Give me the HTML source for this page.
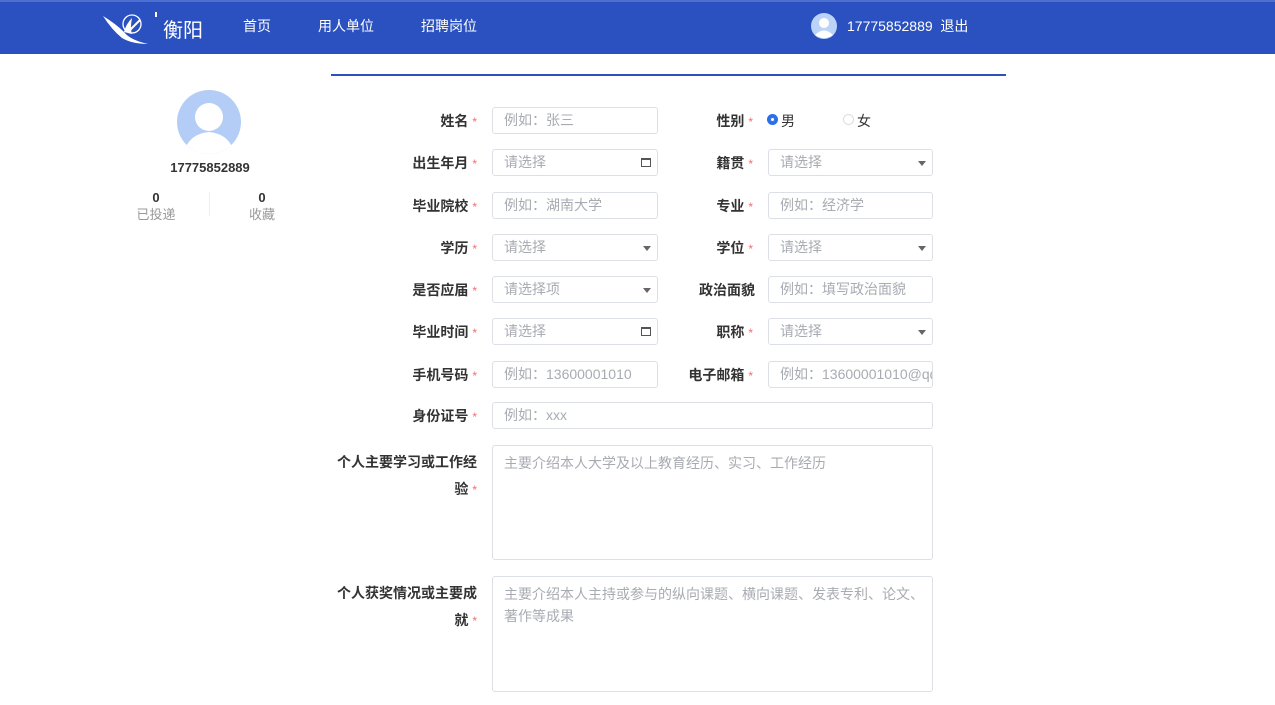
<!DOCTYPE html>
<html><head><meta charset="utf-8"><style>
*{box-sizing:border-box;margin:0;padding:0}
body{width:1275px;height:705px;background:#fff;font-family:"Liberation Sans","Noto Sans CJK SC",sans-serif;position:relative;overflow:hidden;color:#333}
.hd{position:absolute;left:0;top:0;width:1275px;height:54px;background:#2a51bf;border-top:2px solid #4c6fd0}
.hd span{position:absolute;color:#fff;font-size:14px;top:14px}
.a{position:absolute}
.lbl{position:absolute;font-size:14px;font-weight:bold;color:#333;text-align:right;width:160px}
.lbl i{color:#f56c6c;font-style:normal;font-weight:normal;margin-left:4px;font-size:12px}
.in{position:absolute;height:27px;border:1px solid #dcdfe6;border-radius:3px;font-size:14px;color:#a8abb2;padding:0 11px;line-height:25px;white-space:nowrap;overflow:hidden}
.ta{position:absolute;border:1px solid #dcdfe6;border-radius:3px;font-size:14px;color:#a8abb2;padding:6px 4px 6px 11px;line-height:22px}
.arr{position:absolute;right:6px;top:11px;width:0;height:0;border-left:4px solid transparent;border-right:4px solid transparent;border-top:5px solid #666}
.cal{position:absolute;right:6px;top:8px;width:10px;height:9px;border:1px solid #555;border-top-width:2px}
</style></head><body>
<div class="hd">
<svg class="a" style="left:102px;top:8px" width="56" height="36" viewBox="0 0 56 36"><path d="M1 6 Q14 14 22 22 Q28 30 46 34 Q30 34 20 28 Q10 20 1 6Z" fill="#fff"/><path d="M22 22 Q24 14 30 8 Q28 18 30 24Z" fill="#fff"/><circle cx="30" cy="14" r="9" fill="none" stroke="#fff" stroke-width="1.3"/><path d="M28 20 L38 10" stroke="#fff" stroke-width="2"/><rect x="53" y="2" width="2" height="5" fill="#fff"/></svg>
<span style="left:163px;top:12px;font-size:20px">衡阳</span>
<span style="left:243px">首页</span>
<span style="left:318px">用人单位</span>
<span style="left:421px">招聘岗位</span>
<svg class="a" style="left:811px;top:11px" width="26" height="26" viewBox="0 0 26 26"><circle cx="13" cy="13" r="13" fill="#bcd3f8"/><circle cx="13" cy="10" r="5" fill="#fff"/><path d="M4 22 Q13 13 22 22 Q13 28 4 22Z" fill="#fff"/></svg>
<span style="left:847px">17775852889&nbsp;&nbsp;退出</span>
</div>
<div class="a" style="left:331px;top:74px;width:675px;height:2px;background:#2a51bf"></div>
<svg class="a" style="left:177px;top:90px" width="64" height="64" viewBox="0 0 64 64"><defs><clipPath id="c"><circle cx="32" cy="32" r="32"/></clipPath></defs><circle cx="32" cy="32" r="32" fill="#b4cdf7"/><g clip-path="url(#c)" fill="#fff"><circle cx="32" cy="27" r="14"/><path d="M6 66 Q10 44 32 42 Q54 44 58 66Z"/></g></svg>
<div class="a" style="left:150px;top:160px;width:120px;text-align:center;font-size:13px;font-weight:bold">17775852889</div>
<div class="a" style="left:126px;top:189px;width:60px;text-align:center;font-size:13px;line-height:17px"><b>0</b><br><span style="color:#999">已投递</span></div>
<div class="a" style="left:232px;top:189px;width:60px;text-align:center;font-size:13px;line-height:17px"><b>0</b><br><span style="color:#999">收藏</span></div>
<div class="a" style="left:209px;top:192px;width:1px;height:24px;background:#eee"></div>

<div class="lbl" style="left:317px;top:111px">姓名<i>*</i></div>
<div class="in" style="left:492px;top:107px;width:166px">例如：张三</div>
<div class="lbl" style="left:593px;top:111px">性别<i>*</i></div>
<div class="a" style="left:767px;top:114px;width:11px;height:11px;border-radius:50%;border:3px solid #2a6ee8;background:#fff;box-shadow:0 0 0 1px #2a6ee8 inset"></div>
<div class="a" style="left:781px;top:111px;font-size:14px">男</div>
<div class="a" style="left:843px;top:114px;width:11px;height:11px;border-radius:50%;border:1px solid #ddd"></div>
<div class="a" style="left:857px;top:111px;font-size:14px">女</div>

<div class="lbl" style="left:317px;top:153px">出生年月<i>*</i></div>
<div class="in" style="left:492px;top:149px;width:166px">请选择<div class="cal"></div></div>
<div class="lbl" style="left:593px;top:153px">籍贯<i>*</i></div>
<div class="in" style="left:768px;top:149px;width:165px">请选择<div class="arr"></div></div>

<div class="lbl" style="left:317px;top:196px">毕业院校<i>*</i></div>
<div class="in" style="left:492px;top:192px;width:166px">例如：湖南大学</div>
<div class="lbl" style="left:593px;top:196px">专业<i>*</i></div>
<div class="in" style="left:768px;top:192px;width:165px">例如：经济学</div>

<div class="lbl" style="left:317px;top:238px">学历<i>*</i></div>
<div class="in" style="left:492px;top:234px;width:166px">请选择<div class="arr"></div></div>
<div class="lbl" style="left:593px;top:238px">学位<i>*</i></div>
<div class="in" style="left:768px;top:234px;width:165px">请选择<div class="arr"></div></div>

<div class="lbl" style="left:317px;top:280px">是否应届<i>*</i></div>
<div class="in" style="left:492px;top:276px;width:166px">请选择项<div class="arr"></div></div>
<div class="lbl" style="left:593px;top:280px;width:162px">政治面貌</div>
<div class="in" style="left:768px;top:276px;width:165px">例如：填写政治面貌</div>

<div class="lbl" style="left:317px;top:322px">毕业时间<i>*</i></div>
<div class="in" style="left:492px;top:318px;width:166px">请选择<div class="cal"></div></div>
<div class="lbl" style="left:593px;top:322px">职称<i>*</i></div>
<div class="in" style="left:768px;top:318px;width:165px">请选择<div class="arr"></div></div>

<div class="lbl" style="left:317px;top:365px">手机号码<i>*</i></div>
<div class="in" style="left:492px;top:361px;width:166px">例如：13600001010</div>
<div class="lbl" style="left:593px;top:365px">电子邮箱<i>*</i></div>
<div class="in" style="left:768px;top:361px;width:165px">例如：13600001010@qq.com</div>

<div class="lbl" style="left:317px;top:406px">身份证号<i>*</i></div>
<div class="in" style="left:492px;top:402px;width:441px">例如：xxx</div>

<div class="lbl" style="left:317px;top:449px;line-height:27px">个人主要学习或工作经<br>验<i>*</i></div>
<div class="ta" style="left:492px;top:445px;width:441px;height:115px">主要介绍本人大学及以上教育经历、实习、工作经历</div>
<div class="lbl" style="left:317px;top:580px;line-height:27px">个人获奖情况或主要成<br>就<i>*</i></div>
<div class="ta" style="left:492px;top:576px;width:441px;height:116px">主要介绍本人主持或参与的纵向课题、横向课题、发表专利、论文、<br>著作等成果</div>
</body></html>
